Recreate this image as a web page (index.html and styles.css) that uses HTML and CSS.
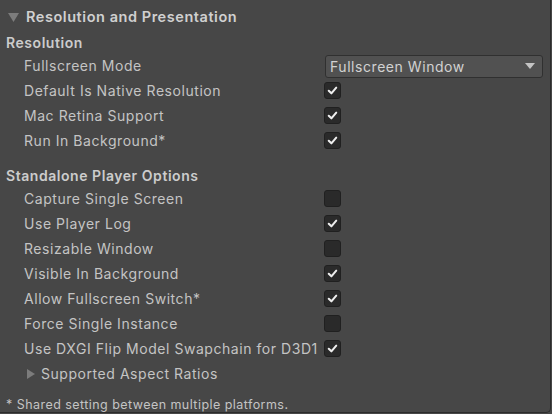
FILE: index.html
```html
<!DOCTYPE html>
<html>
<head>
<meta charset="utf-8">
<link rel="stylesheet" href="styles.css">
</head>
<body>
<div class="panel">
  <div class="title">
    <svg class="tri-down" width="11" height="9" viewBox="0 0 11 9"><path d="M0 0 H11 L5.5 9 Z"/></svg>
    <span>Resolution and Presentation</span>
  </div>

  <div class="section first">Resolution</div>
  <div class="row">
    <div class="label">Fullscreen Mode</div>
    <div class="dropdown">
      <span>Fullscreen Window</span>
      <svg width="10" height="6" viewBox="0 0 10 6"><path d="M0 0 H10 L5 6 Z"/></svg>
    </div>
  </div>
  <div class="row"><div class="label">Default Is Native Resolution</div><div class="check on"><svg viewBox="0 0 16 16"><path d="M4 8.3 L6.8 11 L12 5"/></svg></div></div>
  <div class="row"><div class="label">Mac Retina Support</div><div class="check on"><svg viewBox="0 0 16 16"><path d="M4 8.3 L6.8 11 L12 5"/></svg></div></div>
  <div class="row"><div class="label">Run In Background*</div><div class="check on"><svg viewBox="0 0 16 16"><path d="M4 8.3 L6.8 11 L12 5"/></svg></div></div>

  <div class="section second">Standalone Player Options</div>
  <div class="row"><div class="label">Capture Single Screen</div><div class="check"></div></div>
  <div class="row"><div class="label">Use Player Log</div><div class="check on"><svg viewBox="0 0 16 16"><path d="M4 8.3 L6.8 11 L12 5"/></svg></div></div>
  <div class="row"><div class="label">Resizable Window</div><div class="check"></div></div>
  <div class="row"><div class="label">Visible In Background</div><div class="check on"><svg viewBox="0 0 16 16"><path d="M4 8.3 L6.8 11 L12 5"/></svg></div></div>
  <div class="row"><div class="label">Allow Fullscreen Switch*</div><div class="check on"><svg viewBox="0 0 16 16"><path d="M4 8.3 L6.8 11 L12 5"/></svg></div></div>
  <div class="row"><div class="label">Force Single Instance</div><div class="check"></div></div>
  <div class="row"><div class="label">Use DXGI Flip Model Swapchain for D3D1</div><div class="check on"><svg viewBox="0 0 16 16"><path d="M4 8.3 L6.8 11 L12 5"/></svg></div></div>
  <div class="row foldout">
    <svg class="tri-right" width="8" height="10" viewBox="0 0 8 10"><path d="M0 0 L8 5 L0 10 Z"/></svg>
    <span>Supported Aspect Ratios</span>
  </div>

  <div class="note">* Shared setting between multiple platforms.</div>
</div>
</body>
</html>
```

FILE: styles.css
```css
html, body {
  margin: 0;
  padding: 0;
  background: #474747;
}
body {
  width: 552px;
  height: 414px;
  overflow: hidden;
  font-family: Inter, "Noto Sans", sans-serif;
  font-size: 14px;
  letter-spacing: 0.55px;
  color: #c4c4c4;
}
.panel {
  box-sizing: border-box;
  width: 551px;
  height: 413px;
  background: #474747;
  border-right: 1px solid #2c2c2c;
  border-bottom: 1px solid #2c2c2c;
  border-bottom-right-radius: 5px;
  padding-top: 4px;
}
.title {
  height: 25px;
  display: flex;
  align-items: center;
  padding-left: 8px;
  font-weight: 600;
  font-size: 14.5px;
  color: #d0d0d0;
}
.tri-down {
  fill: #7c7c7c;
  margin-right: 7px;
  margin-top: 1px;
}
.section {
  height: 22px;
  display: flex;
  align-items: center;
  padding-left: 6px;
  font-weight: 600;
  color: #cccccc;
}
.section.first { margin-top: 2px; }
.section.second { margin-top: 11px; }
.row {
  height: 25px;
  display: flex;
  align-items: center;
  padding-left: 24px;
}
.label {
  width: 297px;
  flex: none;
  white-space: nowrap;
  overflow: hidden;
}
.dropdown {
  box-sizing: border-box;
  width: 218px;
  height: 23px;
  margin-left: 4px;
  margin-top: 1px;
  background: #515151;
  border: 1px solid #303030;
  border-radius: 3px;
  display: flex;
  align-items: center;
  justify-content: space-between;
  padding: 0 7px 0 4px;
  color: #d2d2d2;
}
.dropdown svg { fill: #c4c4c4; }
.check {
  box-sizing: border-box;
  width: 17px;
  height: 17px;
  margin-left: 3px;
  background: #2a2a2a;
  border: 1px solid #202020;
  border-radius: 3px;
  display: flex;
  align-items: center;
  justify-content: center;
}
.check svg {
  width: 15px;
  height: 15px;
  fill: none;
  stroke: #eeeeee;
  stroke-width: 2.2;
  stroke-linecap: round;
  stroke-linejoin: round;
}
.foldout {
  padding-left: 27px;
}
.tri-right {
  fill: #7c7c7c;
  margin-right: 6px;
}
.note {
  margin-top: 11px;
  padding-left: 6px;
  font-size: 12.5px;
  letter-spacing: 0.45px;
  height: 16px;
  line-height: 16px;
  color: #c4c4c4;
}
```
